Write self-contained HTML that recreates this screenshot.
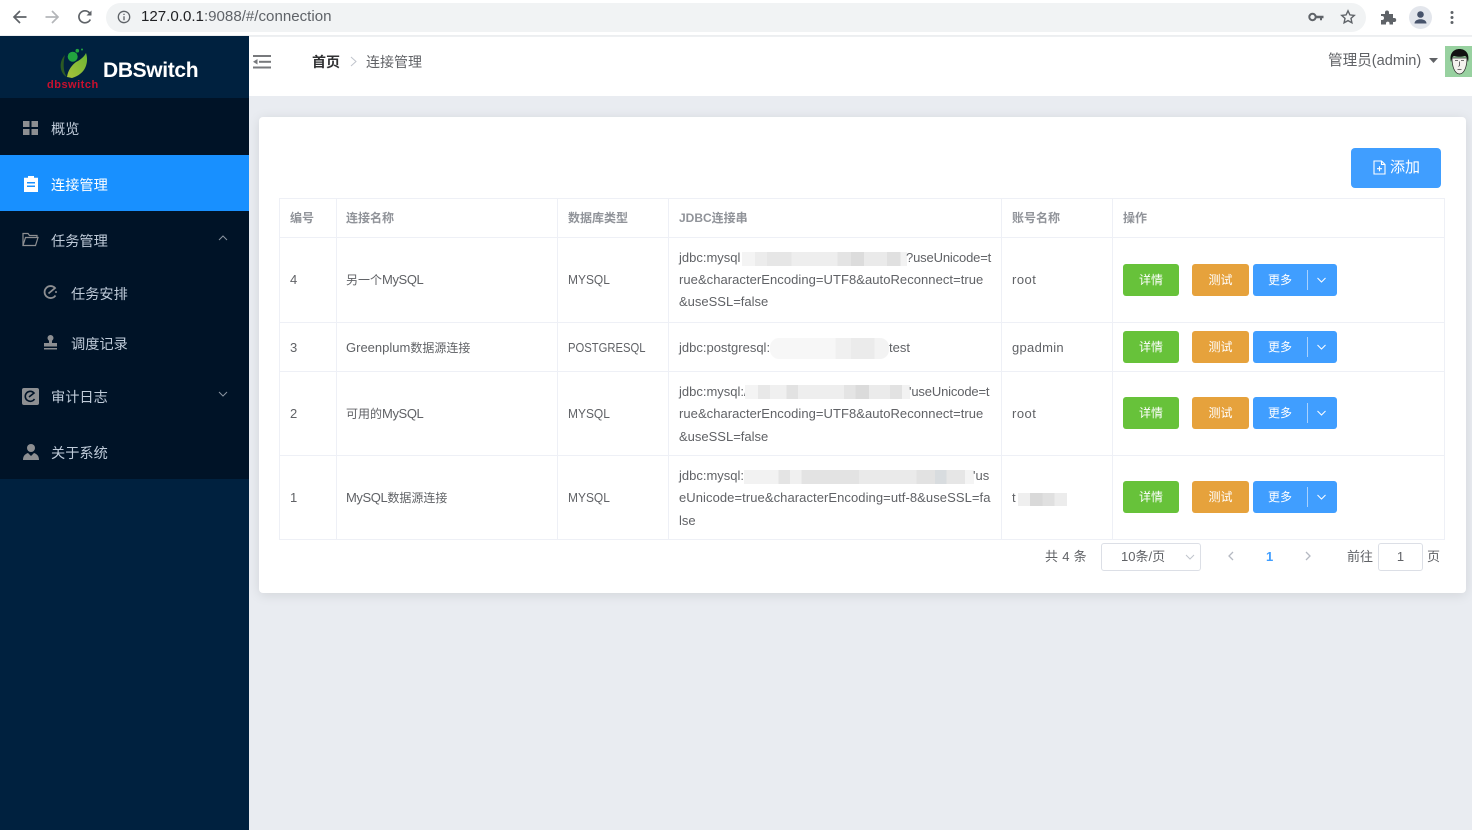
<!DOCTYPE html>
<html lang="zh"><head><meta charset="utf-8"><title>DBSwitch</title>
<style>
*{box-sizing:border-box}
html,body{margin:0;padding:0;width:1472px;height:830px;overflow:hidden;background:#e9ecf1;font-family:"Liberation Sans","Noto Sans CJK SC",sans-serif;color:#606266}
.a{position:absolute;white-space:nowrap}
.t{position:absolute;white-space:nowrap;font-size:13px;line-height:18px;color:#606266}
.j{letter-spacing:.05px}
.n{font-size:12px}
.n b{font-weight:normal;font-size:13px}
.n b.s{letter-spacing:-.4px}
.my{transform:scaleX(.92);transform-origin:0 50%}
.h{position:absolute;white-space:nowrap;font-size:12px;line-height:18px;color:#909399;font-weight:bold}
.m{position:absolute;white-space:nowrap;font-size:14.2px;line-height:20px;color:#bfcbd9;left:51px}
.ln{position:absolute;background:#eef0f6}
.btn{position:absolute;height:32px;border-radius:3px;color:#fff;font-size:12px;line-height:33px;text-align:center}
.blur{position:absolute;background:#ececec}
svg{position:absolute;overflow:visible}
</style></head><body>

<!-- browser chrome -->
<div class="a" style="left:0;top:0;width:1472px;height:36px;background:#fff"></div>
<div class="a" style="left:0;top:35px;width:1472px;height:1px;background:#eceef0"></div>
<div class="a" style="left:106px;top:3px;width:1260px;height:29px;border-radius:15px;background:#f1f3f4"></div>
<svg style="left:12px;top:9px" width="16" height="16" viewBox="0 0 16 16" fill="none" stroke="#5f6368" stroke-width="1.7"><path d="M14.5 8H2M8 2 2 8l6 6"/></svg>
<svg style="left:44px;top:9px" width="16" height="16" viewBox="0 0 16 16" fill="none" stroke="#b4b6b9" stroke-width="1.7"><path d="M1.500 8H14M8 2l6 6-6 6"/></svg>
<svg style="left:77px;top:9px" width="16" height="16" viewBox="0 0 16 16" fill="none" stroke="#5f6368" stroke-width="1.700"><path d="M13.300 10.500A6 6 0 1 1 12.400 3.800L14 5.500"/><path d="M14.500 1.500v5h-5z" fill="#5f6368" stroke="none"/></svg>
<svg style="left:117px;top:10px" width="14" height="14" viewBox="0 0 14 14" fill="none" stroke="#5f6368" stroke-width="1.300"><circle cx="7" cy="7" r="5.700"/><path d="M7 6.200v4M7 3.700v1.300"/></svg>
<div class="a" style="left:141px;top:8px;font-size:15.100px;line-height:18px;color:#5f6368"><span style="color:#202124">127.0.0.1</span>:9088/#/connection</div>
<svg style="left:1308px;top:12px" width="16" height="10" viewBox="0 0 16 10"><circle cx="4.500" cy="5" r="3.200" fill="none" stroke="#5f6368" stroke-width="2"/><path d="M7 3.800h8.500v2.400h-1.500v2h-2v-2H7z" fill="#5f6368"/></svg>
<svg style="left:1340px;top:9px" width="16" height="16" viewBox="0 0 16 16" fill="none" stroke="#5f6368" stroke-width="1.400"><path d="M8 1.800l1.900 4.100 4.400.5-3.300 3 .9 4.400L8 11.600l-3.900 2.200.9-4.400-3.300-3 4.400-.5z"/></svg>
<svg style="left:1380px;top:9px" width="16" height="16" viewBox="0 0 16 16"><path d="M1 5h4V3.500a2 2 0 0 1 4 0V5h4v4h1.200a2 2 0 0 1 0 4H13v2.500H9.500V14a1.800 1.800 0 0 0-3.500 0v1.500H1V11h1a2 2 0 0 0 0-4H1z" fill="#5f6368"/></svg>
<div class="a" style="left:1409px;top:6px;width:23px;height:23px;border-radius:50%;background:#e3e6ec"></div>
<svg style="left:1412px;top:9px" width="17" height="17" viewBox="0 0 17 17"><circle cx="8.500" cy="5.500" r="3.300" fill="#47536b"/><path d="M2.500 14.500c0-3 3-4.300 6-4.300s6 1.300 6 4.300z" fill="#47536b"/></svg>
<svg style="left:1450px;top:10px" width="4" height="15" viewBox="0 0 4 15" fill="#5f6368"><circle cx="2" cy="2.500" r="1.500"/><circle cx="2" cy="7.500" r="1.500"/><circle cx="2" cy="12.500" r="1.500"/></svg>

<!-- sidebar -->
<div class="a" style="left:0;top:36px;width:249px;height:794px;background:#00213f"></div>
<div class="a" style="left:0;top:98px;width:249px;height:381px;background:#001327"></div>
<div class="a" style="left:0;top:155px;width:249px;height:56px;background:#1890ff"></div>
<svg style="left:58px;top:48px" width="32" height="32" viewBox="0 0 32 32"><defs><linearGradient id="lf" x1="0" y1="1" x2="1" y2="0"><stop offset="0" stop-color="#a9c23a"/><stop offset="1" stop-color="#6cb534"/></linearGradient></defs><path d="M7 7C0 14 2 26 9 29 5 24 5 14 7 7z" fill="#2c5a24"/><path d="M9 29C10 22 14 17 18 14 22 12 26 9 28 5 31 14 28 26 14 30z" fill="url(#lf)"/><circle cx="14.700" cy="8.700" r="5" fill="#22a53f"/><circle cx="19.300" cy="2.700" r="1.800" fill="#22a53f"/><circle cx="24" cy="1.500" r="1" fill="#22a53f"/></svg>
<div class="a" style="left:47px;top:79px;font-size:11px;line-height:13px;font-weight:bold;color:#c8102e;letter-spacing:.5px">dbswitch</div>
<div class="a" style="left:103px;top:57px;font-size:21px;line-height:27px;font-weight:bold;color:#fff;letter-spacing:-.35px">DBSwitch</div>

<svg style="left:23px;top:121px" width="15" height="14" viewBox="0 0 15 14" fill="#8d8f92"><rect width="6.500" height="6"/><rect x="8.500" width="6.500" height="6"/><rect y="8" width="6.500" height="6"/><rect x="8.500" y="8" width="6.500" height="6"/></svg>
<div class="m" style="top:120px">概览</div>
<svg style="left:24px;top:176px" width="14" height="16" viewBox="0 0 14 16"><path d="M0 2h4V0h6v2h4v16H0z" transform="scale(1 .89)" fill="#fff"/><rect x="3" y="6" width="8" height="1.500" fill="#1890ff"/><rect x="3" y="9.500" width="8" height="1.500" fill="#1890ff"/></svg>
<div class="m" style="top:176px;color:#fff">连接管理</div>
<svg style="left:22px;top:232px" width="17" height="15" viewBox="0 0 17 15" fill="none" stroke="#8d8f92" stroke-width="1.200"><path d="M1 13.500V1.500h5l1.500 2H15v2"/><path d="M1 13.500h12.500L16 5.500H3.500z"/></svg>
<div class="m" style="top:232px">任务管理</div>
<svg style="left:218px;top:235px" width="10" height="6" viewBox="0 0 10 6" fill="none" stroke="#8a94a0"><path d="M1 5l4-4 4 4"/></svg>
<svg style="left:43px;top:285px" width="15" height="15" viewBox="0 0 15 15" fill="none" stroke="#8d8f92" stroke-width="1.800"><path d="M12.500 10.500A6 6 0 1 1 12 3L5.500 8.500"/><circle cx="13" cy="7" r="1" fill="#8d8f92" stroke="none"/></svg>
<div class="m" style="top:285px;left:71px">任务安排</div>
<svg style="left:43px;top:335px" width="15" height="15" viewBox="0 0 15 15" fill="#8d8f92"><circle cx="7.500" cy="3" r="3"/><path d="M6 5h3v3h5v3.500H1V8h5z"/><rect x="1" y="13" width="13" height="1.500"/></svg>
<div class="m" style="top:335px;left:71px">调度记录</div>
<svg style="left:22px;top:388px" width="17" height="17" viewBox="0 0 17 17"><rect width="17" height="17" rx="2" fill="#8d8f92"/><path d="M12.500 11A5 5 0 1 1 12 5L7 9" fill="none" stroke="#001327" stroke-width="1.600"/></svg>
<div class="m" style="top:388px">审计日志</div>
<svg style="left:218px;top:391px" width="10" height="6" viewBox="0 0 10 6" fill="none" stroke="#8a94a0"><path d="M1 1l4 4 4-4"/></svg>
<svg style="left:23px;top:444px" width="16" height="16" viewBox="0 0 16 16" fill="#8d8f92"><circle cx="8" cy="4" r="4"/><path d="M0 16c0-4 2-6 5-7l3 3 3-3c3 1 5 3 5 7z"/></svg>
<div class="m" style="top:444px">关于系统</div>

<!-- top header -->
<div class="a" style="left:249px;top:36px;width:1223px;height:60px;background:#fff;border-top:1px solid #eef0f2"></div>
<svg style="left:253px;top:55px" width="18" height="14" viewBox="0 0 18 14" fill="#77797c"><rect y="0" width="18" height="2"/><rect x="6" y="5.800" width="12" height="2"/><rect y="11.500" width="18" height="2"/><path d="M0 6.800 4.500 4v5.500z"/></svg>
<div class="a" style="left:312px;top:52px;font-size:14px;line-height:20px;font-weight:bold;color:#303133">首页</div>
<svg style="left:350px;top:56px" width="7" height="11" viewBox="0 0 7 11" fill="none" stroke="#c0c4cc"><path d="M1 1l5 4.500L1 10"/></svg>
<div class="a" style="left:366px;top:52px;font-size:14px;line-height:20px;color:#606266">连接管理</div>
<div class="a" style="left:1328px;top:51px;font-size:14.600px;line-height:20px;color:#606266">管理员(admin)</div>
<svg style="left:1429px;top:58px" width="9" height="5" viewBox="0 0 9 5" fill="#606266"><path d="M0 0h9L4.500 5z"/></svg>
<div class="a" style="left:1445px;top:46px;width:27px;height:31px;background:#98d1a0"></div>
<svg style="left:1450px;top:49px" width="19" height="26" viewBox="0 0 19 26"><path d="M2 9C2 18 5 25 9.500 25S17 18 17 9z" fill="#f4f2ee" stroke="#222" stroke-width=".7"/><path d="M1 13C-1 4 4 0 9.500 0S20 4 18 13C17 9 17 8 15 7 11 8 8 8 4 7 2 8 2 9 1 13z" fill="#111"/><path d="M5 11.500h3M11 11.500h3M9.500 12.500v4l-1 1M7.500 20.500h4" stroke="#444" stroke-width=".8" fill="none"/></svg>

<!-- card -->
<div class="a" style="left:259px;top:117px;width:1207px;height:476px;background:#fff;border-radius:4px;box-shadow:0 2px 12px rgba(0,0,0,.1)"></div>
<div class="a" style="left:1351px;top:148px;width:90px;height:40px;border-radius:4px;background:#409eff"></div>
<svg style="left:1373px;top:160px" width="13" height="15" viewBox="0 0 13 15" fill="none" stroke="#fff" stroke-width="1.100"><path d="M1 1h7.500L12 4.500V14H1zM8.500 1v3.500H12M4 8.700h5M6.500 6.200v5"/></svg>
<div class="a" style="left:1390px;top:158px;font-size:15px;line-height:20px;color:#fff">添加</div>

<!-- table lines -->
<div class="ln" style="left:279px;top:198px;width:1166px;height:1px"></div>
<div class="ln" style="left:279px;top:237px;width:1166px;height:1px"></div>
<div class="ln" style="left:279px;top:322px;width:1166px;height:1px"></div>
<div class="ln" style="left:279px;top:371px;width:1166px;height:1px"></div>
<div class="ln" style="left:279px;top:455px;width:1166px;height:1px"></div>
<div class="ln" style="left:279px;top:539px;width:1166px;height:1px"></div>
<div class="ln" style="left:279px;top:198px;width:1px;height:342px"></div>
<div class="ln" style="left:336px;top:198px;width:1px;height:342px"></div>
<div class="ln" style="left:557px;top:198px;width:1px;height:342px"></div>
<div class="ln" style="left:668px;top:198px;width:1px;height:342px"></div>
<div class="ln" style="left:1001px;top:198px;width:1px;height:342px"></div>
<div class="ln" style="left:1112px;top:198px;width:1px;height:342px"></div>
<div class="ln" style="left:1444px;top:198px;width:1px;height:342px"></div>

<!-- header -->
<div class="h" style="left:290px;top:209px">编号</div>
<div class="h" style="left:346px;top:209px">连接名称</div>
<div class="h" style="left:568px;top:209px">数据库类型</div>
<div class="h" style="left:679px;top:209px">JDBC连接串</div>
<div class="h" style="left:1012px;top:209px">账号名称</div>
<div class="h" style="left:1123px;top:209px">操作</div>

<!-- row 4 -->
<div class="t" style="left:290px;top:271px">4</div>
<div class="t n" style="left:346px;top:271px">另一个<b class="s">MySQL</b></div>
<div class="t my" style="left:568px;top:271px">MYSQL</div>
<div class="t" style="left:679px;top:249px">jdbc:mysql</div>
<div class="blur" style="left:742px;top:252px;width:165px;height:14px;background:linear-gradient(90deg,#f4f4f4 0 8%,#ececec 8% 15%,#e6e6e6 15% 30%,#eeeeee 30% 58%,#e4e4e4 58% 66%,#dcdcdc 66% 74%,#eaeaea 74% 88%,#e0e0e0 88% 96%,#f2f2f2 96%)"></div>
<div class="t" style="left:906px;top:249px;letter-spacing:-.15px">?useUnicode=t</div>
<div class="t j" style="left:679px;top:271px">rue&amp;characterEncoding=UTF8&amp;autoReconnect=true</div>
<div class="t" style="left:679px;top:293px">&amp;useSSL=false</div>
<div class="t" style="left:1012px;top:271px;letter-spacing:.5px">root</div>

<!-- row 3 -->
<div class="t" style="left:290px;top:339px">3</div>
<div class="t n" style="left:346px;top:339px"><b>Greenplum</b>数据源连接</div>
<div class="t" style="left:568px;top:339px;transform:scaleX(.865);transform-origin:0 50%">POSTGRESQL</div>
<div class="t" style="left:679px;top:339px">jdbc:postgresql:</div>
<div class="blur" style="left:770px;top:338px;width:119px;height:21px;border-radius:9px;background:linear-gradient(90deg,#f7f7f7 0 55%,#f0f0f0 55% 68%,#ebebeb 68% 88%,#f3f3f3 88%)"></div>
<div class="t" style="left:889px;top:339px">test</div>
<div class="t" style="left:1012px;top:339px;letter-spacing:.3px">gpadmin</div>

<!-- row 2 -->
<div class="t" style="left:290px;top:405px">2</div>
<div class="t n" style="left:346px;top:405px">可用的<b class="s">MySQL</b></div>
<div class="t my" style="left:568px;top:405px">MYSQL</div>
<div class="t" style="left:679px;top:383px">jdbc:mysql:/</div>
<div class="blur" style="left:745px;top:385px;width:165px;height:14px;background:linear-gradient(90deg,#f4f4f4 0 8%,#e8e8e8 8% 15%,#f0f0f0 15% 25%,#e2e2e2 25% 32%,#eeeeee 32% 60%,#e4e4e4 60% 67%,#dbdbdb 67% 75%,#ebebeb 75% 88%,#e2e2e2 88% 95%,#f2f2f2 95%)"></div>
<div class="t" style="left:909px;top:383px;letter-spacing:-.15px">'useUnicode=t</div>
<div class="t j" style="left:679px;top:405px">rue&amp;characterEncoding=UTF8&amp;autoReconnect=true</div>
<div class="t" style="left:679px;top:428px">&amp;useSSL=false</div>
<div class="t" style="left:1012px;top:405px;letter-spacing:.5px">root</div>

<!-- row 1 -->
<div class="t" style="left:290px;top:489px">1</div>
<div class="t n" style="left:346px;top:489px"><b class="s">MySQL</b>数据源连接</div>
<div class="t my" style="left:568px;top:489px">MYSQL</div>
<div class="t" style="left:679px;top:467px">jdbc:mysql:</div>
<div class="blur" style="left:744px;top:470px;width:230px;height:14px;background:linear-gradient(90deg,#f2f2f2 0 15%,#e4e4e4 15% 20%,#f0f0f0 20% 25%,#e3e3e3 25% 50%,#eaeaea 50% 75%,#e2e2e2 75% 83%,#d8dcdf 83% 88%,#e6e6e6 88% 96%,#f4f4f4 96%)"></div>
<div class="t" style="left:973px;top:467px">'us</div>
<div class="t" style="left:679px;top:489px;letter-spacing:.07px">eUnicode=true&amp;characterEncoding=utf-8&amp;useSSL=fa</div>
<div class="t" style="left:679px;top:512px">lse</div>
<div class="t" style="left:1012px;top:489px">t</div>
<div class="blur" style="left:1018px;top:493px;width:49px;height:13px;background:linear-gradient(90deg,#efefef 0 25%,#d9d9d9 25% 50%,#e0e0e0 50% 75%,#ececec 75%)"></div>

<!-- buttons -->
<div class="btn" style="left:1123px;top:264px;width:56px;background:#67c23a">详情</div>
<div class="btn" style="left:1192px;top:264px;width:57px;background:#e6a23c">测试</div>
<div class="btn" style="left:1253px;top:264px;width:84px;background:#409eff;text-align:left;padding-left:15px">更多</div>
<div class="a" style="left:1307px;top:270px;width:1px;height:20px;background:#a9d2ff"></div>
<svg style="left:1317px;top:277px" width="9" height="6" viewBox="0 0 9 6" fill="none" stroke="#fff"><path d="M.5 1l4 4 4-4"/></svg>

<div class="btn" style="left:1123px;top:331px;width:56px;background:#67c23a">详情</div>
<div class="btn" style="left:1192px;top:331px;width:57px;background:#e6a23c">测试</div>
<div class="btn" style="left:1253px;top:331px;width:84px;background:#409eff;text-align:left;padding-left:15px">更多</div>
<div class="a" style="left:1307px;top:337px;width:1px;height:20px;background:#a9d2ff"></div>
<svg style="left:1317px;top:344px" width="9" height="6" viewBox="0 0 9 6" fill="none" stroke="#fff"><path d="M.5 1l4 4 4-4"/></svg>

<div class="btn" style="left:1123px;top:397px;width:56px;background:#67c23a">详情</div>
<div class="btn" style="left:1192px;top:397px;width:57px;background:#e6a23c">测试</div>
<div class="btn" style="left:1253px;top:397px;width:84px;background:#409eff;text-align:left;padding-left:15px">更多</div>
<div class="a" style="left:1307px;top:403px;width:1px;height:20px;background:#a9d2ff"></div>
<svg style="left:1317px;top:410px" width="9" height="6" viewBox="0 0 9 6" fill="none" stroke="#fff"><path d="M.5 1l4 4 4-4"/></svg>

<div class="btn" style="left:1123px;top:481px;width:56px;background:#67c23a">详情</div>
<div class="btn" style="left:1192px;top:481px;width:57px;background:#e6a23c">测试</div>
<div class="btn" style="left:1253px;top:481px;width:84px;background:#409eff;text-align:left;padding-left:15px">更多</div>
<div class="a" style="left:1307px;top:487px;width:1px;height:20px;background:#a9d2ff"></div>
<svg style="left:1317px;top:494px" width="9" height="6" viewBox="0 0 9 6" fill="none" stroke="#fff"><path d="M.5 1l4 4 4-4"/></svg>

<!-- pagination -->
<div class="a" style="left:1045px;top:547px;font-size:13px;line-height:20px;color:#606266;letter-spacing:.3px">共 4 条</div>
<div class="a" style="left:1101px;top:543px;width:100px;height:28px;border:1px solid #dcdfe6;border-radius:3px;background:#fff"></div>
<div class="a" style="left:1121px;top:547px;font-size:13px;line-height:20px;color:#606266">10条/页</div>
<svg style="left:1185px;top:554px" width="10" height="6" viewBox="0 0 10 6" fill="none" stroke="#c0c4cc"><path d="M1 1l4 4 4-4"/></svg>
<svg style="left:1228px;top:551px" width="6" height="10" viewBox="0 0 6 10" fill="none" stroke="#b5b9c2" stroke-width="1.300"><path d="M5 1L1 5l4 4"/></svg>
<div class="a" style="left:1266px;top:547px;font-size:13px;line-height:20px;font-weight:bold;color:#409eff">1</div>
<svg style="left:1305px;top:551px" width="6" height="10" viewBox="0 0 6 10" fill="none" stroke="#b5b9c2" stroke-width="1.300"><path d="M1 1l4 4-4 4"/></svg>
<div class="a" style="left:1347px;top:547px;font-size:13px;line-height:20px;color:#606266">前往</div>
<div class="a" style="left:1378px;top:543px;width:45px;height:28px;border:1px solid #dcdfe6;border-radius:3px;background:#fff;text-align:center;font-size:13px;line-height:26px;color:#606266">1</div>
<div class="a" style="left:1427px;top:547px;font-size:13px;line-height:20px;color:#606266">页</div>
</body></html>
